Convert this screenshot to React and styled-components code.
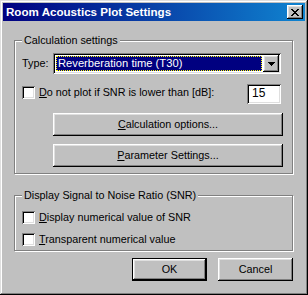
import styled, { createGlobalStyle } from 'styled-components';

const GlobalStyle = createGlobalStyle`
  html, body {
    margin: 0;
    padding: 0;
    background: #c0c0c0;
  }
  body {
    font-family: "Liberation Sans", Arial, sans-serif;
    font-size: 10.8px;
    color: #000;
  }
  * {
    box-sizing: border-box;
  }
`;

const raised = `
  background: #c0c0c0;
  box-shadow: inset -1px -1px #000, inset 1px 1px #fff, inset -2px -2px #808080, inset 2px 2px #dfdfdf;
`;

const sunken = `
  background: #fff;
  box-shadow: inset 1px 1px #808080, inset -1px -1px #fff, inset 2px 2px #000, inset -2px -2px #dfdfdf;
`;

function CloseGlyph() {
    const rows = ['xx....xx', '.xx..xx.', '..xxxx..', '...xx...', '..xxxx..', '.xx..xx.', 'xx....xx'];
    return (
        <svg width="8" height="7" viewBox="0 0 8 7" shapeRendering="crispEdges">
            {rows.map((row, y) =>
                row.split('').map((c, x) => c === 'x' ? <rect key={`${x}-${y}`} x={x} y={y} width="1" height="1" fill="#000" /> : null)
            )}
        </svg>
    );
}

function ArrowGlyph() {
    return (
        <svg width="7" height="4" viewBox="0 0 7 4" shapeRendering="crispEdges">
            <rect x="0" y="0" width="7" height="1" fill="#000" />
            <rect x="1" y="1" width="5" height="1" fill="#000" />
            <rect x="2" y="2" width="3" height="1" fill="#000" />
            <rect x="3" y="3" width="1" height="1" fill="#000" />
        </svg>
    );
}

function Hotkey({ children }) {
    return <u>{children}</u>;
}

export default function App() {
    return (
        <>
            <GlobalStyle />
            <Window>
                <TitleBar>
                    <Title>Room Acoustics Plot Settings</Title>
                    <CloseButton><CloseGlyph /></CloseButton>
                </TitleBar>
                <Client>
                    <Group $pad="12px 11px 6px 7px">
                        <Caption>Calculation settings</Caption>
                        <TypeRow>
                            <FieldLabel>Type:</FieldLabel>
                            <Combo>
                                <Selection>Reverberation time (T30)</Selection>
                                <DropButton><ArrowGlyph /></DropButton>
                            </Combo>
                        </TypeRow>
                        <SnrRow>
                            <CheckItem>
                                <CheckBox />
                                <span><Hotkey>D</Hotkey>o not plot if SNR is lower than [dB]:</span>
                            </CheckItem>
                            <Edit>15</Edit>
                        </SnrRow>
                        <WideButton $top={9}><Hotkey>C</Hotkey>alculation options...</WideButton>
                        <WideButton $top={8}><Hotkey>P</Hotkey>arameter Settings...</WideButton>
                    </Group>
                    <Group $pad="15px 0 4px 7px" $top={21}>
                        <Caption>Display Signal to Noise Ratio (SNR)</Caption>
                        <CheckItem>
                            <CheckBox />
                            <span><Hotkey>D</Hotkey>isplay numerical value of SNR</span>
                        </CheckItem>
                        <CheckItem $top={9}>
                            <CheckBox />
                            <span><Hotkey>T</Hotkey>ransparent numerical value</span>
                        </CheckItem>
                    </Group>
                    <ButtonRow>
                        <DialogButton $default>OK</DialogButton>
                        <DialogButton>Cancel</DialogButton>
                    </ButtonRow>
                </Client>
            </Window>
        </>
    );
}

const Window = styled.div`
    width: 308px;
    height: 295px;
    padding: 3px;
    display: flex;
    flex-direction: column;
    background: #c0c0c0;
    box-shadow: inset -1px -1px #000, inset 1px 1px #dfdfdf, inset -2px -2px #808080, inset 2px 2px #fff;
`;

const TitleBar = styled.div`
    height: 18px;
    display: flex;
    align-items: center;
    justify-content: space-between;
    padding: 0 2px 0 3px;
    background: linear-gradient(to right, #000080, #1084d0);
`;

const Title = styled.span`
    color: #fff;
    font-weight: bold;
    font-size: 11.6px;
    line-height: 14px;
    white-space: nowrap;
`;

const CloseButton = styled.div`
    width: 16px;
    height: 14px;
    display: flex;
    align-items: center;
    justify-content: center;
    padding-right: 1px;
    ${raised}
`;

const Client = styled.div`
    display: flex;
    flex-direction: column;
    padding: 19px 12px 0 11px;
`;

const Group = styled.div`
    position: relative;
    margin-top: ${(props) => props.$top || 0}px;
    padding: ${(props) => props.$pad};
    border: 1px solid #808080;
    box-shadow: inset 1px 1px #fff, 1px 1px #fff;
`;

const Caption = styled.span`
    position: absolute;
    top: -7px;
    left: 7px;
    padding: 0 2px;
    line-height: 13px;
    background: #c0c0c0;
    white-space: nowrap;
`;

const TypeRow = styled.div`
    display: flex;
    align-items: center;
    height: 21px;
`;

const FieldLabel = styled.span`
    width: 31px;
    line-height: 13px;
`;

const Combo = styled.div`
    width: 228px;
    height: 21px;
    display: flex;
    padding: 2px;
    ${sunken}
`;

const Selection = styled.div`
    flex: 1;
    margin: 1px;
    padding-left: 1px;
    line-height: 13px;
    font-size: 11.2px;
    color: #fff;
    background: #000080;
    border: 1px dotted #ffff00;
    white-space: nowrap;
`;

const DropButton = styled.div`
    width: 16px;
    height: 17px;
    display: flex;
    align-items: center;
    justify-content: center;
    ${raised}
`;

const SnrRow = styled.div`
    display: flex;
    align-items: flex-start;
    justify-content: space-between;
    height: 20px;
    margin-top: 10px;
    padding-top: 2px;
`;

const CheckItem = styled.label`
    display: flex;
    align-items: center;
    gap: 4px;
    height: 13px;
    margin-top: ${(props) => props.$top || 0}px;
    line-height: 13px;
    white-space: nowrap;
`;

const CheckBox = styled.span`
    width: 13px;
    height: 13px;
    flex: none;
    ${sunken}
`;

const Edit = styled.div`
    width: 34px;
    height: 20px;
    margin-top: -2px;
    padding: 3px 0 0 5px;
    line-height: 13px;
    font-size: 12px;
    ${sunken}
`;

const WideButton = styled.div`
    width: 230px;
    height: 23px;
    margin: ${(props) => props.$top}px 0 0 31px;
    display: flex;
    align-items: center;
    justify-content: center;
    line-height: 13px;
    ${raised}
`;

const ButtonRow = styled.div`
    display: flex;
    justify-content: flex-end;
    gap: 11px;
    margin-top: 7px;
`;

const DialogButton = styled.div`
    width: 75px;
    height: 23px;
    display: flex;
    align-items: center;
    justify-content: center;
    line-height: 13px;
    border: ${(props) => props.$default ? '1px solid #000' : 'none'};
    ${raised}
`;
